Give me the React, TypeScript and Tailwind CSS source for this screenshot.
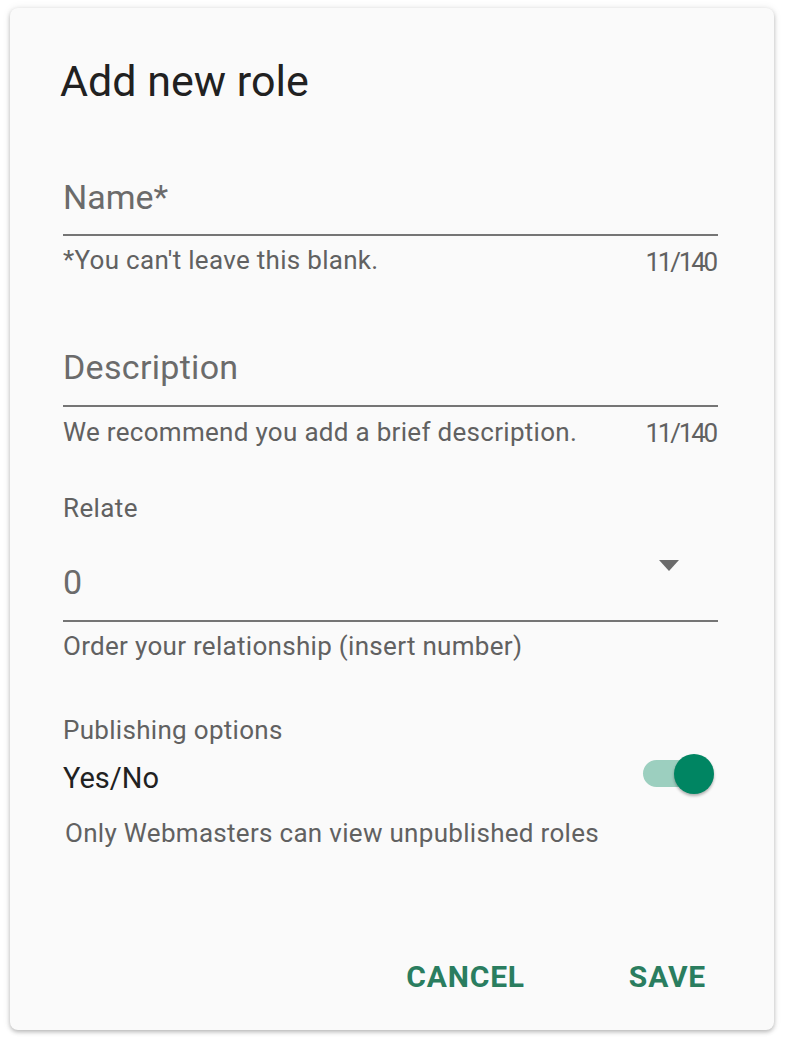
import React from "react";

const font = { fontFamily: "Roboto, 'Noto Sans', Arial, sans-serif" };

export default function App() {
  return (
    <div className="w-[786px] h-[1040px] bg-white pt-[8px] pl-[10px]" style={font}>
      <div className="w-[764px] h-[1022px] bg-[#fafafa] rounded-[8px] shadow-[0_2px_4px_rgba(0,0,0,0.25),0_0_8px_rgba(0,0,0,0.08)] pl-[53px] pr-[56px] pt-[52px] flex flex-col">
        <h1 className="ml-[-3px] text-[43px] leading-[43px] text-[#212121] font-normal">Add new role</h1>

        {/* Name */}
        <div className="mt-[77px] border-b-2 border-[#757575] pb-[20px]">
          <div className="text-[34px] leading-[34px] text-[#6b6b6b]">Name*</div>
        </div>
        <div className="mt-[11px] flex justify-between items-baseline text-[26px] leading-[26px] text-[#616161]">
          <span className="tracking-[0.3px]">*You can't leave this blank.</span>
          <span className="tracking-[-2.2px] translate-y-[2px] mr-[2px]">11/140</span>
        </div>

        {/* Description */}
        <div className="mt-[77px] border-b-2 border-[#757575] pb-[21px]">
          <div className="text-[34px] leading-[34px] tracking-[0.3px] text-[#6b6b6b]">Description</div>
        </div>
        <div className="mt-[12px] flex justify-between items-baseline text-[26px] leading-[26px] text-[#616161]">
          <span className="tracking-[0.3px]">We recommend you add a brief description.</span>
          <span className="tracking-[-2.2px] translate-y-[1px] mr-[2px]">11/140</span>
        </div>

        {/* Relate */}
        <div className="mt-[50px] text-[26px] leading-[26px] tracking-[0.4px] text-[#616161]">Relate</div>
        <div className="mt-[44px] border-b-2 border-[#757575] pb-[21px] flex justify-between items-start">
          <div className="text-[34px] leading-[34px] text-[#6b6b6b]">0</div>
          <svg width="20" height="11" viewBox="0 0 20 11" className="mr-[39px] mt-[-5px]">
            <path d="M0 0 L20 0 L10 11 Z" fill="#6b6b6b" />
          </svg>
        </div>
        <div className="mt-[11px] text-[26px] leading-[26px] tracking-[0.3px] text-[#616161]">
          Order your relationship (insert number)
        </div>

        {/* Publishing */}
        <div className="mt-[58px] text-[26px] leading-[26px] tracking-[0.3px] text-[#616161]">Publishing options</div>
        <div className="mt-[21px] flex justify-between items-start">
          <span className="text-[29px] leading-[29px] text-[#212121]">Yes/No</span>
          <div className="relative w-[71px] h-[40px] mr-[4px] mt-[-10px]">
            <div className="absolute left-0 top-[6px] w-[56px] h-[27px] rounded-full bg-[#9ccfbf]" />
            <div className="absolute right-0 top-0 w-[40px] h-[40px] rounded-full bg-[#008562] shadow-[0_2px_3px_rgba(0,0,0,0.3)]" />
          </div>
        </div>
        <div className="mt-[26px] ml-[2px] text-[26px] leading-[26px] tracking-[0.3px] text-[#616161]">
          Only Webmasters can view unpublished roles
        </div>

        <div className="mt-auto mb-[38px] flex justify-end items-center gap-[104px] pr-[12px]">
          <span className="text-[30px] leading-[30px] font-bold tracking-[0.8px] text-[#2a7d5f]">CANCEL</span>
          <span className="text-[30px] leading-[30px] font-bold tracking-[0.8px] text-[#2a7d5f]">SAVE</span>
        </div>
      </div>
    </div>
  );
}
